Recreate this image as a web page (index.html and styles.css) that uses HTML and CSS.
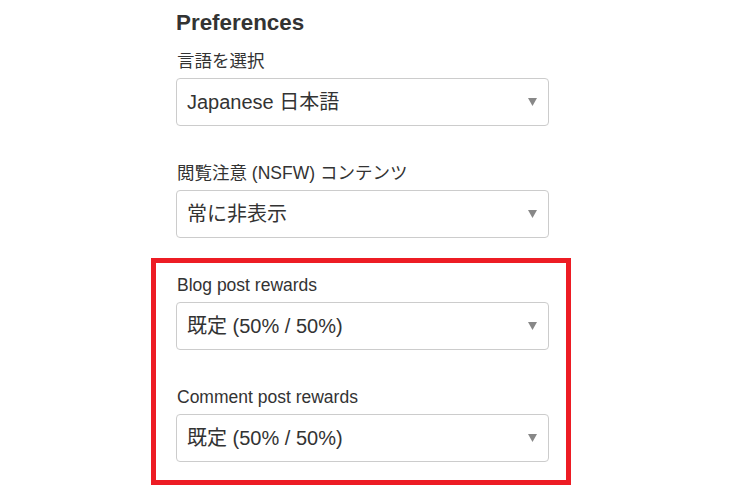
FILE: index.html
```html
<!DOCTYPE html>
<html lang="ja">
<head>
<meta charset="utf-8">
<title>Preferences</title>
<link rel="stylesheet" href="styles.css">
</head>
<body>
<section class="prefs">
  <h2 class="prefs-title">Preferences</h2>
  <div class="field">
    <label class="field-label">言語を選択</label>
    <div class="select"><span class="select-value">Japanese 日本語</span><svg class="select-arrow" width="9" height="8" viewBox="0 0 9 8"><path d="M0 0H9L4.5 8Z"/></svg></div>
  </div>
  <div class="field">
    <label class="field-label">閲覧注意 (NSFW) コンテンツ</label>
    <div class="select"><span class="select-value">常に非表示</span><svg class="select-arrow" width="9" height="8" viewBox="0 0 9 8"><path d="M0 0H9L4.5 8Z"/></svg></div>
  </div>
  <div class="highlight">
    <div class="field">
      <label class="field-label">Blog post rewards</label>
      <div class="select"><span class="select-value">既定 (50% / 50%)</span><svg class="select-arrow" width="9" height="8" viewBox="0 0 9 8"><path d="M0 0H9L4.5 8Z"/></svg></div>
    </div>
    <div class="field">
      <label class="field-label">Comment post rewards</label>
      <div class="select"><span class="select-value">既定 (50% / 50%)</span><svg class="select-arrow" width="9" height="8" viewBox="0 0 9 8"><path d="M0 0H9L4.5 8Z"/></svg></div>
    </div>
  </div>
</section>
</body>
</html>
```

FILE: styles.css
```css
* { box-sizing: border-box; }
html, body { margin: 0; padding: 0; background: #fff; }
body {
  font-family: "Liberation Sans", Arial, "Noto Sans CJK JP", sans-serif;
  color: #333;
}
.prefs {
  margin-left: 176px;
  width: 373px;
  padding-top: 11px;
}
.prefs-title {
  margin: 0 0 15px 0;
  font-size: 22.4px;
  line-height: 24px;
  font-weight: bold;
  color: #333;
}
.field { display: flex; flex-direction: column; gap: 5px; }
.field + .field { margin-top: 36px; }
.field-label {
  font-size: 17.5px;
  line-height: 23px;
  padding-left: 1px;
}
.select {
  height: 48px;
  border: 1px solid #ccc;
  border-radius: 4px;
  background: #fff;
  display: flex;
  align-items: center;
  justify-content: space-between;
  padding: 0 11px 0 10px;
}
.select-value {
  font-size: 20px;
  line-height: 24px;
  color: #333;
}
.select-arrow { fill: #888; flex: none; }
.highlight {
  margin: 20px -22px 0 -25px;
  border: 5px solid #ed1c24;
  padding: 11px 17px 18px 20px;
}
```
